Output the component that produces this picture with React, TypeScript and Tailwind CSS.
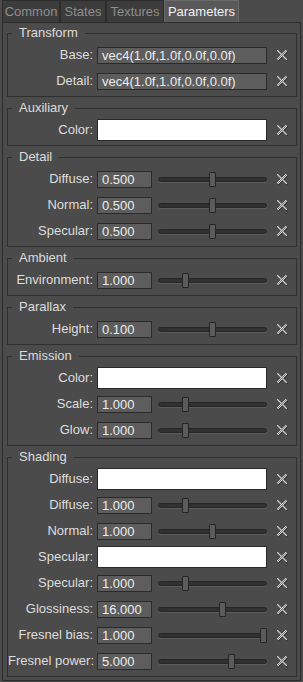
import React from "react";

type Row =
  | { label: string; kind: "text"; value: string }
  | { label: string; kind: "color" }
  | { label: string; kind: "number"; value: string; pos: number };

type Group = { title: string; rows: Row[] };

const VEC = "vec4(1.0f,1.0f,0.0f,0.0f)";

const groups: Group[] = [
  {
    title: "Transform",
    rows: [
      { label: "Base", kind: "text", value: VEC },
      { label: "Detail", kind: "text", value: VEC },
    ],
  },
  { title: "Auxiliary", rows: [{ label: "Color", kind: "color" }] },
  {
    title: "Detail",
    rows: [
      { label: "Diffuse", kind: "number", value: "0.500", pos: 0.5 },
      { label: "Normal", kind: "number", value: "0.500", pos: 0.5 },
      { label: "Specular", kind: "number", value: "0.500", pos: 0.5 },
    ],
  },
  {
    title: "Ambient",
    rows: [{ label: "Environment", kind: "number", value: "1.000", pos: 0.24 }],
  },
  {
    title: "Parallax",
    rows: [{ label: "Height", kind: "number", value: "0.100", pos: 0.5 }],
  },
  {
    title: "Emission",
    rows: [
      { label: "Color", kind: "color" },
      { label: "Scale", kind: "number", value: "1.000", pos: 0.24 },
      { label: "Glow", kind: "number", value: "1.000", pos: 0.24 },
    ],
  },
  {
    title: "Shading",
    rows: [
      { label: "Diffuse", kind: "color" },
      { label: "Diffuse", kind: "number", value: "1.000", pos: 0.24 },
      { label: "Normal", kind: "number", value: "1.000", pos: 0.5 },
      { label: "Specular", kind: "color" },
      { label: "Specular", kind: "number", value: "1.000", pos: 0.24 },
      { label: "Glossiness", kind: "number", value: "16.000", pos: 0.6 },
      { label: "Fresnel bias", kind: "number", value: "1.000", pos: 1 },
      { label: "Fresnel power", kind: "number", value: "5.000", pos: 0.69 },
    ],
  },
];

// pixelated, checkered "clear" cross
function ClearIcon() {
  const px: React.ReactNode[] = [];
  const shadow: React.ReactNode[] = [];
  for (let y = 0; y < 10; y++) {
    for (let x = 0; x < 10; x++) {
      const onA = Math.abs(x - y) <= 1;
      const onB = Math.abs(x + y - 9) <= 1;
      if (onA || onB) {
        shadow.push(<rect key={`s${x}-${y}`} x={x + 1} y={y + 1} width={1} height={1} fill="#3e3e3e" />);
        const light = (x + y) % 2 === 0;
        px.push(
          <rect
            key={`p${x}-${y}`}
            x={x}
            y={y}
            width={1}
            height={1}
            fill={light ? "#c9c9c9" : "#808080"}
          />
        );
      }
    }
  }
  return (
    <svg width="11" height="11" viewBox="0 0 11 11" shapeRendering="crispEdges" className="shrink-0">
      {shadow}
      {px}
    </svg>
  );
}

function Slider({ pos }: { pos: number }) {
  return (
    <div className="relative ml-[6px] h-[17px] w-[109px] flex items-center">
      <div className="h-[5px] w-full rounded-full bg-[#313131] border border-[#262626] shadow-[0_1px_0_#5c5c5c]" />
      <div
        className="absolute top-[1px] h-[15px] w-[7px] rounded-[1px] bg-[#5b5b5b] border border-[#252525]"
        style={{ left: `${pos * 102}px` }}
      />
    </div>
  );
}

function Field({ row }: { row: Row }) {
  if (row.kind === "color") {
    return <div className="h-[22px] w-[170px] bg-white border border-[#2a2a2a]" />;
  }
  if (row.kind === "text") {
    return (
      <div className="h-[17px] w-[170px] bg-[#5d5d5d] border border-[#2a2a2a] pl-[4px] text-[#ececec] leading-[15px]">
        {row.value}
      </div>
    );
  }
  return (
    <div className="flex items-center">
      <div className="h-[17px] w-[55px] bg-[#5d5d5d] border border-[#2a2a2a] pl-[4px] text-[#ececec] leading-[15px]">
        {row.value}
      </div>
      <Slider pos={row.pos} />
    </div>
  );
}

export default function App() {
  const tabs = [
    { name: "Common", w: "w-[58px]" },
    { name: "States", w: "w-[46px]" },
    { name: "Textures", w: "w-[58px]" },
    { name: "Parameters", w: "w-[75px]", active: true },
  ];

  return (
    <div
      className="w-[303px] h-[682px] bg-[#4b4b4b] text-[13px] text-[#dedede] overflow-hidden"
      style={{ fontFamily: '"Liberation Sans", Arial, sans-serif' }}
    >
      {/* Tabs */}
      <div className="flex h-[22px] pl-[2px]">
        {tabs.map((t) => (
          <div
            key={t.name}
            className={`${t.w} flex items-center justify-center border border-b-0 ${
              t.active
                ? "bg-[#595959] border-[#6a6a6a] text-[#f2f2f2]"
                : "bg-[#3c3c3c] border-[#2c2c2c] text-[#8e8e8e]"
            }`}
          >
            {t.name}
          </div>
        ))}
      </div>

      {/* Panel */}
      <div className="ml-[2px] w-[299px] h-[659px] border border-[#2c2c2c] pt-[3px] pl-[4px] pr-[3px] flex flex-col gap-[4px]">
        {groups.map((g) => (
          <fieldset key={g.title} className="w-[290px] border border-[#2f2f2f] pt-[2px] pb-[2px]">
            <legend className="ml-[4px] px-[7px] leading-[14px] text-[#dcdcdc]">{g.title}</legend>
            {g.rows.map((r, i) => (
              <div key={i} className="flex items-center h-[26px]">
                <div className="w-[85px] text-right whitespace-nowrap">{r.label}:</div>
                <div className="ml-[4px]">
                  <Field row={r} />
                </div>
                <div className="ml-[10px]">
                  <ClearIcon />
                </div>
              </div>
            ))}
          </fieldset>
        ))}
      </div>
    </div>
  );
}
